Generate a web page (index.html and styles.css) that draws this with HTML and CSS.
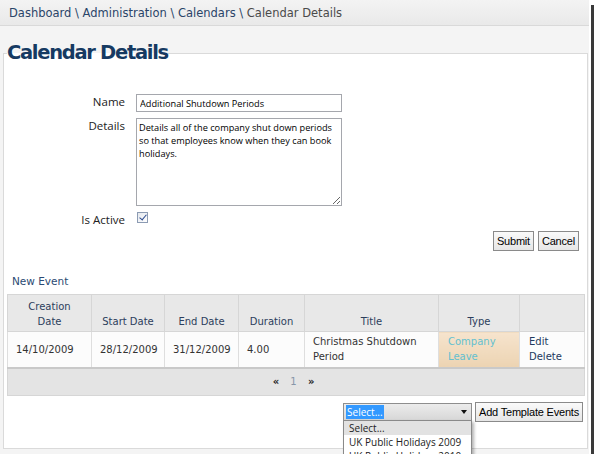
FILE: index.html
```html
<!DOCTYPE html>
<html lang="en">
<head>
    <meta charset="UTF-8">
    <title>Calendar Details</title>
    <link rel="stylesheet" href="styles.css">
</head>
<body>
    <div class="window">
        <!-- Breadcrumb -->
        <div class="breadcrumb">
            <a href="#">Dashboard</a> \ <a href="#">Administration</a> \ <a href="#">Calendars</a> \ <span class="current">Calendar Details</span>
        </div>

        <fieldset class="panel">
            <legend>Calendar Details</legend>

            <!-- Calendar form -->
            <div class="form">
                <label for="name">Name</label>
                <input type="text" id="name" class="field" value="Additional Shutdown Periods">

                <label for="details">Details</label>
                <textarea id="details" class="field area">Details all of the company shut down periods so that employees know when they can book holidays.</textarea>

                <label for="active">Is Active</label>
                <div><input type="checkbox" id="active" class="check" checked></div>
            </div>

            <div class="actions">
                <button class="btn">Submit</button>
                <button class="btn">Cancel</button>
            </div>

            <a href="#" class="new-event">New Event</a>

            <!-- Events grid -->
            <table class="grid">
                <thead>
                    <tr>
                        <th class="c-created">Creation Date</th>
                        <th class="c-start">Start Date</th>
                        <th class="c-end">End Date</th>
                        <th class="c-duration">Duration</th>
                        <th class="c-title">Title</th>
                        <th class="c-type">Type</th>
                        <th class="c-links"></th>
                    </tr>
                </thead>
                <tbody>
                    <tr>
                        <td>14/10/2009</td>
                        <td>28/12/2009</td>
                        <td>31/12/2009</td>
                        <td>4.00</td>
                        <td>Christmas Shutdown Period</td>
                        <td class="type"><a href="#">Company Leave</a></td>
                        <td class="links"><a href="#">Edit</a><br><a href="#">Delete</a></td>
                    </tr>
                </tbody>
                <tfoot>
                    <tr>
                        <td colspan="7" class="pager">
                            <span class="arrow">&laquo;</span>
                            <span class="page">1</span>
                            <span class="arrow">&raquo;</span>
                        </td>
                    </tr>
                </tfoot>
            </table>

            <!-- Template events -->
            <div class="template-bar">
                <div class="combo">
                    <span class="combo-value">Select...</span>
                    <span class="combo-arrow"></span>
                    <ul class="combo-list">
                        <li class="hover">Select...</li>
                        <li>UK Public Holidays 2009</li>
                        <li>UK Public Holidays 2010</li>
                    </ul>
                </div>
                <button class="btn">Add Template Events</button>
            </div>
        </fieldset>
    </div>
</body>
</html>
```

FILE: styles.css
```css
/* Reset */
* {
    box-sizing: border-box;
}

body {
    margin: 0;
    background: #fff;
    font-family: "DejaVu Sans", sans-serif;
    overflow: hidden;
}

a {
    text-decoration: none;
}

/* Window with screenshot shadow */
.window {
    width: 589px;
    height: 454px;
    background: #f4f4f4;
    box-shadow: 2px 2px 0 #fff, 5px 5px 0 #3a3a3a;
}

/* Breadcrumb */
.breadcrumb {
    height: 26px;
    padding: 6px 9px 0;
    font-size: 11.5px;
    color: #2a4468;
    background: linear-gradient(#f3f3f3, #e9e9e9);
    border-bottom: 1px solid #d9d9d9;
}

.breadcrumb a {
    color: #2a4468;
}

.breadcrumb .current {
    color: #4a4a4a;
}

/* Panel */
.panel {
    margin: 14px 1px 0 3px;
    padding: 0 0 26px;
    border: 1px solid #dadada;
    background: #fff;
    min-width: 0;
}

.panel legend {
    margin-left: 3px;
    padding: 0;
    font-weight: bold;
    font-size: 19.5px;
    letter-spacing: -1.3px;
    line-height: 26px;
    color: #163a62;
}

/* Form */
.form {
    display: grid;
    grid-template-columns: 121px 206px;
    column-gap: 11px;
    row-gap: 6px;
    margin-top: 28px;
}

.form label {
    text-align: right;
    font-family: "Open Sans", sans-serif;
    font-size: 11.5px;
    line-height: 16px;
    color: #222;
}

.field {
    width: 206px;
    height: 18px;
    margin: 0;
    padding: 0 3px;
    border: 1px solid #a5a7ad;
    font-family: "Open Sans", sans-serif;
    font-size: 9.2px;
    color: #000;
}

.area {
    height: 88px;
    padding: 2px 2px;
    line-height: 13px;
    resize: both;
}

.check {
    appearance: none;
    display: block;
    position: relative;
    width: 11px;
    height: 11px;
    margin: 0 0 0 1px;
    border: 1px solid #8c9bb3;
    background: linear-gradient(135deg, #e4e8ee, #fff);
}

.check:checked::after {
    content: "";
    position: absolute;
    left: 3px;
    top: 0;
    width: 3px;
    height: 6px;
    border: solid #2b4a8e;
    border-width: 0 1.5px 1.5px 0;
    transform: rotate(40deg);
}

/* Buttons */
.actions {
    display: flex;
    justify-content: flex-end;
    gap: 4px;
    margin-top: 3px;
    padding-right: 8px;
}

.btn {
    height: 20px;
    margin: 0;
    padding: 0 3px;
    font-family: "Liberation Sans", sans-serif;
    font-size: 11px;
    letter-spacing: -0.2px;
    color: #000;
    background: linear-gradient(#fafafa, #e6e6e6);
    border: 1px solid #8a8a8a;
    border-radius: 0;
}

/* New event link */
.new-event {
    display: block;
    margin: 23px 0 6px 8px;
    font-size: 10.5px;
    line-height: 14px;
    color: #2b4a73;
}

/* Grid */
.grid {
    width: 577px;
    margin-left: 3px;
    table-layout: fixed;
    border-collapse: collapse;
    border: 1px solid #d6d6d6;
    font-size: 10px;
    line-height: 15px;
}

.grid th {
    height: 37px;
    padding: 0 8px 2px;
    vertical-align: bottom;
    font-weight: normal;
    color: #2c3e5c;
    background: #e8e8e8;
    border: 1px solid #d6d6d6;
}

.c-created { width: 84px; }
.c-start { width: 73px; }
.c-end { width: 74px; }
.c-duration { width: 66px; }
.c-title { width: 134px; }
.c-type { width: 81px; }
.c-links { width: 65px; }

.grid tbody td {
    height: 36px;
    padding: 0 8px;
    color: #333;
    background: #fcfcfc;
    border: 1px solid #dedede;
}

.grid td.type {
    padding-left: 9px;
    background: linear-gradient(#f6e4cd, #ecd3b2);
}

.grid td.type a {
    color: #63c0d0;
}

.grid td.links {
    padding-left: 9px;
}

.grid td.links a {
    color: #233a5e;
}

.grid .pager {
    height: 28px;
    padding-right: 6px;
    text-align: center;
    background: #e4e4e4;
    border-top: 2px solid #c9c9c9;
}

.pager .arrow {
    font-weight: bold;
    color: #222;
}

.pager .page {
    margin: 0 8px;
    color: #8796a8;
}

/* Template events */
.template-bar {
    display: flex;
    justify-content: flex-end;
    align-items: center;
    gap: 3px;
    margin-top: 6px;
    padding-right: 4px;
}

.combo {
    position: relative;
    width: 129px;
    height: 18px;
    padding: 1px 2px;
    border: 1px solid #8e8e8e;
    background: linear-gradient(#ececec, #d7d7d7);
    font-family: "Open Sans", sans-serif;
    font-size: 10px;
    line-height: 14px;
}

.combo-value {
    display: inline-block;
    padding: 0 1px;
    color: #fff;
    background: #3399ff;
}

.combo-arrow {
    position: absolute;
    right: 4px;
    top: 6px;
    border: 3px solid transparent;
    border-top: 4px solid #111;
    border-bottom: 0;
}

.combo-list {
    position: absolute;
    top: 16px;
    left: -1px;
    width: 129px;
    margin: 0;
    padding: 0;
    list-style: none;
    background: #fff;
    border: 1px solid #8a8a8a;
    box-shadow: 2px 2px 3px rgba(0, 0, 0, 0.3);
    color: #222;
}

.combo-list li {
    height: 14px;
    padding: 0 5px;
    line-height: 14px;
}

.combo-list li.hover {
    background: #e2e2e2;
}
```
